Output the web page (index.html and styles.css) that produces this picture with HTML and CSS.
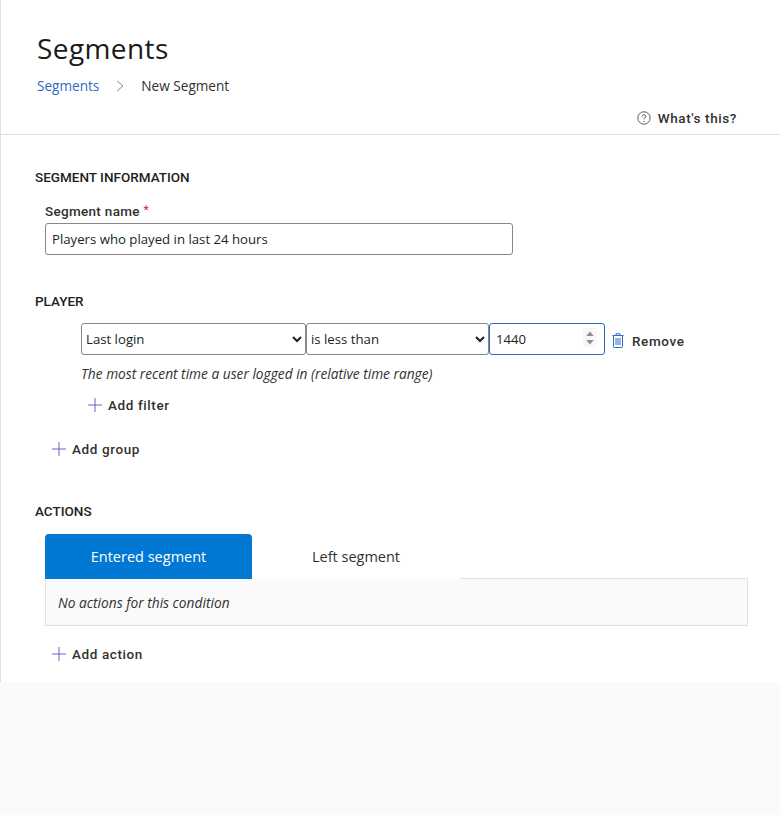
FILE: index.html
```html
<!DOCTYPE html>
<html lang="en">
<head>
<meta charset="utf-8">
<title>Segments</title>
<link rel="stylesheet" href="styles.css">
</head>
<body>
<main class="page">
  <header class="page-header">
    <h1 class="title">Segments</h1>
    <nav class="crumbs">
      <a class="crumb-link" href="#">Segments</a>
      <svg class="crumb-sep" width="8" height="12" viewBox="0 0 8 12"><path d="M1 1l6 5-6 5" fill="none" stroke="#8a8886" stroke-width="1"/></svg>
      <span>New Segment</span>
    </nav>
    <div class="help-row">
      <svg class="help-icon" width="14" height="14" viewBox="0 0 14 14"><circle cx="7" cy="7" r="6.2" fill="none" stroke="#605e5c" stroke-width="1"/><path d="M5.2 5.5a1.8 1.8 0 1 1 2.7 1.5c-.6.4-.9.7-.9 1.4" fill="none" stroke="#605e5c" stroke-width="1"/><circle cx="7" cy="10.4" r=".7" fill="#605e5c"/></svg>
      <a class="action-text" href="#">What's this?</a>
    </div>
  </header>

  <section class="section info">
    <h2 class="section-title">SEGMENT INFORMATION</h2>
    <div class="field">
      <label class="field-label" for="name">Segment name <span class="req">*</span></label>
      <input class="control name-input" id="name" type="text" value="Players who played in last 24 hours">
    </div>
  </section>

  <section class="section player">
    <h2 class="section-title">PLAYER</h2>
    <div class="filter">
      <div class="filter-row">
        <select class="control sel-a"><option>Last login</option></select>
        <select class="control sel-b"><option>is less than</option></select>
        <div class="num-wrap">
          <input class="control num" type="number" value="1440">
          <svg class="spinner" width="14" height="19" viewBox="0 0 14 19"><rect width="14" height="19" fill="#f7f7f7"/><path d="M7 3.5l3.7 4.5H3.3z" fill="#8f8f8f"/><path d="M7 16.5l-3.7-4.5h7.4z" fill="#8f8f8f"/></svg>
        </div>
        <a class="remove" href="#">
          <svg width="12" height="15" viewBox="0 0 12 15"><path d="M4 2V.8h4V2M.5 2.5h11M1.5 2.5v11.2a.8.8 0 0 0 .8.8h7.4a.8.8 0 0 0 .8-.8V2.5" fill="none" stroke="#2f6bc4" stroke-width="1"/><path d="M4 5v7M6 5v7M8 5v7" stroke="#2f6bc4" stroke-width="1"/></svg>
          <span class="action-text">Remove</span>
        </a>
      </div>
      <p class="hint">The most recent time a user logged in (relative time range)</p>
      <a class="add add-filter" href="#">
        <svg class="plus" width="14" height="14" viewBox="0 0 14 14"><path d="M7 0v14M0 7h14" stroke="#6b5fc7" stroke-width="1"/></svg>
        <span class="action-text">Add filter</span>
      </a>
    </div>
    <a class="add add-group" href="#">
      <svg class="plus" width="14" height="14" viewBox="0 0 14 14"><path d="M7 0v14M0 7h14" stroke="#6b5fc7" stroke-width="1"/></svg>
      <span class="action-text">Add group</span>
    </a>
  </section>

  <section class="section actions">
    <h2 class="section-title">ACTIONS</h2>
    <div class="tabs">
      <div class="tab tab-active">Entered segment</div>
      <div class="tab">Left segment</div>
    </div>
    <div class="tab-panel">No actions for this condition</div>
    <a class="add add-action" href="#">
      <svg class="plus" width="14" height="14" viewBox="0 0 14 14"><path d="M7 0v14M0 7h14" stroke="#6b5fc7" stroke-width="1"/></svg>
      <span class="action-text">Add action</span>
    </a>
  </section>
</main>
</body>
</html>
```

FILE: styles.css
```css
* { box-sizing: border-box; }
html, body { margin: 0; padding: 0; }
body {
  background: #fafafa;
  color: #201f1e;
  font-family: "Open Sans", "Liberation Sans", sans-serif;
  font-size: 14px;
  height: 815px;
  overflow: hidden;
}
a { text-decoration: none; color: inherit; }
.page {
  background: #fff;
  border-left: 1px solid #e0e0e0;
  height: 682px;
}
.page-header {
  height: 135px;
  border-bottom: 1px solid #e0e0e0;
  padding: 28px 43px 0 36px;
}
.title {
  margin: 0;
  font-size: 28px;
  font-weight: 400;
  line-height: 40px;
  letter-spacing: 0.4px;
  color: #1b1a19;
}
.crumbs {
  display: flex;
  align-items: center;
  height: 20px;
  margin-top: 8px;
  font-size: 13.6px;
  line-height: 20px;
  color: #323130;
}
.crumb-link { color: #2f6bc4; }
.crumb-sep { margin: 0 17px 0 17px; }
.help-row {
  display: flex;
  justify-content: flex-end;
  align-items: center;
  gap: 7px;
  height: 18px;
  margin-top: 13px;
}
.action-text {
  font-family: Roboto, "Liberation Sans", sans-serif;
  font-size: 13.5px;
  font-weight: 500;
  letter-spacing: 0.6px;
  color: #323130;
}
.section-title {
  margin: 0;
  font-family: Roboto, "Liberation Sans", sans-serif;
  font-size: 13.5px;
  font-weight: 500;
  line-height: 18px;
  color: #201f1e;
}
.section { padding-left: 34px; }
.info { padding-top: 33px; }
.field { padding-left: 10px; margin-top: 15px; }
.field-label {
  display: block;
  font-family: Roboto, "Liberation Sans", sans-serif;
  font-size: 13.5px;
  font-weight: 500;
  letter-spacing: 0.3px;
  line-height: 18px;
  color: #323130;
}
.req {
  color: #c4314b;
  font-size: 12px;
  font-weight: 400;
  vertical-align: 2px;
}
.control {
  display: block;
  height: 32px;
  margin: 0;
  background: #fff;
  border: 1px solid #8a8886;
  border-radius: 3px;
  font-family: "Open Sans", "Liberation Sans", sans-serif;
  font-size: 13.2px;
  color: #201f1e;
}
.name-input { width: 468px; margin-top: 3px; padding: 0 6px; }
.player { padding-top: 37px; }
.filter { padding-left: 46px; margin-top: 13px; }
.filter-row { display: flex; align-items: center; }
.sel-a { width: 225px; padding-left: 0; }
.sel-b { width: 183px; padding-left: 0; }
.num-wrap { position: relative; width: 116px; }
.num { width: 116px; padding: 0 6px; border-color: #2f6bc4; outline: none; appearance: textfield; }
.num::-webkit-inner-spin-button { display: none; }
.spinner { position: absolute; top: 5px; right: 8px; }
.remove { display: flex; align-items: center; gap: 8px; margin-left: 7px; padding-top: 3px; }
.hint { margin: 9px 0 0; font-size: 13.73px; font-style: italic; line-height: 20px; color: #323130; }
.add { display: flex; align-items: center; gap: 6px; }
.add-filter { margin: 11px 0 0 7px; height: 20px; }
.add-group { margin: 24px 0 0 17px; height: 20px; }
.actions { padding-top: 43px; }
.tabs { display: flex; position: relative; margin: 14px 0 -1px 10px; height: 45px; }
.tab {
  width: 208px;
  display: flex;
  align-items: center;
  justify-content: center;
  background: #fff;
  font-size: 14.5px;
  line-height: 20px;
  color: #323130;
}
.tab-active {
  width: 207px;
  background: #0078d4;
  color: #fff;
  border-radius: 4px 4px 0 0;
}
.tab-panel {
  margin-left: 10px;
  width: 703px;
  height: 48px;
  padding-left: 12px;
  display: flex;
  align-items: center;
  background: #fafafa;
  border: 1px solid #e0e0e0;
  font-size: 13.76px;
  font-style: italic;
  color: #323130;
}
.add-action { margin: 18px 0 0 17px; height: 20px; }
```
